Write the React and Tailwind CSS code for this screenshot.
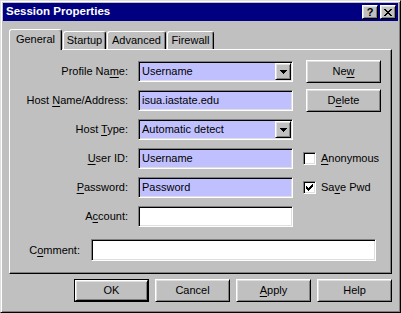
import React from 'react';

// win95 bevels
const raised =
  'border border-t-white border-l-white border-r-black border-b-black shadow-[inset_1px_1px_0_#dfdfdf,inset_-1px_-1px_0_#808080]';
const sunken =
  'border border-t-[#808080] border-l-[#808080] border-r-white border-b-white shadow-[inset_1px_1px_0_#000,inset_-1px_-1px_0_#dfdfdf]';

const U = ({ children }) => <span className="underline underline-offset-[2px]">{children}</span>;

const Pixels = ({ w, h, runs, className }) => (
  <svg width={w} height={h} viewBox={`0 0 ${w} ${h}`} shapeRendering="crispEdges" className={className}>
    {runs.map(([y, x1, x2], i) => (
      <rect key={i} x={x1} y={y} width={x2 - x1 + 1} height={1} fill="#000" />
    ))}
  </svg>
);

const closeGlyph = [
  [0, 0, 1], [0, 6, 7],
  [1, 1, 2], [1, 5, 6],
  [2, 2, 5],
  [3, 3, 4],
  [4, 2, 5],
  [5, 1, 2], [5, 5, 6],
  [6, 0, 1], [6, 6, 7],
];

const checkGlyph = [
  [0, 6, 6],
  [1, 5, 6],
  [2, 0, 0], [2, 4, 6],
  [3, 0, 1], [3, 3, 5],
  [4, 0, 4],
  [5, 1, 3],
  [6, 2, 2],
];

const arrowGlyph = [
  [0, 0, 6],
  [1, 1, 5],
  [2, 2, 4],
  [3, 3, 3],
];

function Button({ children, className = '' }) {
  return (
    <div className={`w-[75px] h-[23px] bg-[#c0c0c0] flex items-center justify-center ${raised} ${className}`}>
      {children}
    </div>
  );
}

function Field({ value, className = '' }) {
  return (
    <div className={`h-[21px] flex items-center pl-[3px] ${sunken} ${className}`}>
      {value}
    </div>
  );
}

function Check({ checked }) {
  return (
    <div className={`w-[13px] h-[13px] bg-white flex items-center justify-center ${sunken}`}>
      {checked && <Pixels w={7} h={7} runs={checkGlyph} />}
    </div>
  );
}

function Tab({ label, active, className = '' }) {
  if (active) {
    return (
      <div className="h-[21px] w-[53px] bg-[#c0c0c0] flex items-center justify-center pb-[1px] border-l border-t border-r border-l-white border-t-white border-r-black rounded-t-[3px] shadow-[inset_-1px_0_0_#808080]">
        {label}
      </div>
    );
  }
  return (
    <div
      className={`h-[18px] mb-[1px] bg-[#c0c0c0] flex items-center justify-center border-l border-t border-r border-l-white border-t-white border-r-black rounded-t-[3px] shadow-[inset_-1px_0_0_#808080] ${className}`}
    >
      {label}
    </div>
  );
}

export default function App() {
  return (
    <div className="w-[401px] h-[313px] bg-[#c0c0c0] text-black text-[11px] leading-none font-['Liberation_Sans',Arial,sans-serif] border border-t-[#dfdfdf] border-l-[#dfdfdf] border-r-black border-b-black shadow-[inset_1px_1px_0_#fff,inset_-1px_-1px_0_#808080] p-[2px] flex flex-col">
      {/* title bar */}
      <div className="h-[18px] bg-[#000080] flex items-center justify-between pl-[3px] pr-[2px]">
        <span className="text-white font-bold text-[11.5px]">Session Properties</span>
        <div className="flex gap-[2px]">
          <div className={`w-[16px] h-[14px] bg-[#c0c0c0] flex items-center justify-center font-bold text-[11px] ${raised}`}>
            ?
          </div>
          <div className={`w-[16px] h-[14px] bg-[#c0c0c0] flex items-center justify-center ${raised}`}>
            <Pixels w={8} h={7} runs={closeGlyph} />
          </div>
        </div>
      </div>

      <div className="px-[6px] pt-[8px] flex flex-col">
        {/* tabs */}
        <div className="h-[21px] -mb-[1px] relative z-10 flex items-end">
          <Tab label="General" active />
          <Tab label="Startup" className="w-[43px] ml-[1px]" />
          <Tab label="Advanced" className="w-[59px] ml-[1px]" />
          <Tab label="Firewall" className="w-[47px] ml-[1px]" />
        </div>

        {/* panel */}
        <div className="h-[225px] border border-t-white border-l-white border-r-black border-b-black shadow-[inset_-1px_-1px_0_#808080] pt-[11px] flex flex-col">
          <div className="flex items-center h-[21px]">
            <div className="w-[118px] text-right">
              Profile Na<U>m</U>e:
            </div>
            <div className={`ml-[10px] w-[155px] h-[21px] flex ${sunken} p-[1px]`}>
              <div className="flex-1 bg-[#c0c0ff] flex items-center pl-[2px]">Username</div>
              <div className={`w-[16px] h-full bg-[#c0c0c0] flex items-center justify-center ${raised}`}>
                <Pixels w={7} h={4} runs={arrowGlyph} />
              </div>
            </div>
            <Button className="ml-[13px]">
              Ne<U>w</U>
            </Button>
          </div>

          <div className="flex items-center h-[21px] mt-[8px]">
            <div className="w-[118px] text-right">
              Host <U>N</U>ame/Address:
            </div>
            <Field value="isua.iastate.edu" className="ml-[10px] w-[155px] bg-[#c0c0ff]" />
            <Button className="ml-[13px]">
              D<U>e</U>lete
            </Button>
          </div>

          <div className="flex items-center h-[21px] mt-[8px]">
            <div className="w-[118px] text-right">
              Host <U>T</U>ype:
            </div>
            <div className={`ml-[10px] w-[155px] h-[21px] flex ${sunken} p-[1px]`}>
              <div className="flex-1 bg-[#c0c0ff] flex items-center pl-[2px]">Automatic detect</div>
              <div className={`w-[16px] h-full bg-[#c0c0c0] flex items-center justify-center ${raised}`}>
                <Pixels w={7} h={4} runs={arrowGlyph} />
              </div>
            </div>
          </div>

          <div className="flex items-center h-[21px] mt-[8px]">
            <div className="w-[118px] text-right">
              <U>U</U>ser ID:
            </div>
            <Field value="Username" className="ml-[10px] w-[155px] bg-[#c0c0ff]" />
            <div className="ml-[10px] flex items-center gap-[5px]">
              <Check />
              <span>
                <U>A</U>nonymous
              </span>
            </div>
          </div>

          <div className="flex items-center h-[21px] mt-[8px]">
            <div className="w-[118px] text-right">
              <U>P</U>assword:
            </div>
            <Field value="Password" className="ml-[10px] w-[155px] bg-[#c0c0ff]" />
            <div className="ml-[10px] flex items-center gap-[5px]">
              <Check checked />
              <span>
                Sa<U>v</U>e Pwd
              </span>
            </div>
          </div>

          <div className="flex items-center h-[21px] mt-[8px]">
            <div className="w-[118px] text-right">
              A<U>c</U>count:
            </div>
            <Field value="" className="ml-[10px] w-[155px] bg-white" />
          </div>

          <div className="flex items-center h-[22px] mt-[12px]">
            <div className="w-[70px] text-right">
              C<U>o</U>mment:
            </div>
            <Field value="" className="ml-[11px] w-[285px] h-[22px] bg-white" />
          </div>
        </div>

        {/* dialog buttons */}
        <div className="mt-[5px] flex justify-end gap-[6px]">
          <div className="w-[75px] h-[23px] border border-black">
            <div className={`w-full h-full bg-[#c0c0c0] flex items-center justify-center ${raised}`}>OK</div>
          </div>
          <Button>Cancel</Button>
          <Button>
            <U>A</U>pply
          </Button>
          <Button>Help</Button>
        </div>
      </div>
    </div>
  );
}
